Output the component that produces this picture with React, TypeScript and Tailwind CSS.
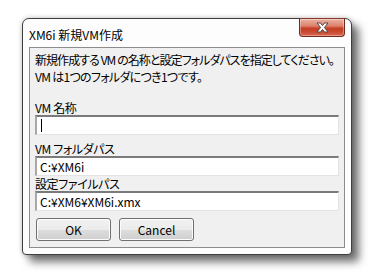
import React from "react";

const font = "font-['Noto_Sans_CJK_JP','Noto_Sans',sans-serif] [font-feature-settings:'palt']";

function Field({ label, value, cursor }: { label: string; value?: string; cursor?: boolean }) {
  return (
    <div className="flex flex-col">
      <div className="h-[15px] text-[12px] leading-[15px] tracking-[-0.4px] text-black whitespace-nowrap">{label}</div>
      <div className="h-[20px] w-[304px] bg-white border-t-[2px] border-l-[2px] border-t-[#7a7a7a] border-l-[#a8a8a8] border-b border-r border-b-[#e3e3e3] border-r-[#e3e3e3] flex items-center pl-[3px] text-[12px] leading-[16px] text-black">
        {cursor ? <div className="w-px h-[13px] bg-black ml-[1px]" /> : value}
      </div>
    </div>
  );
}

function Btn({ children, className = "" }: { children: React.ReactNode; className?: string }) {
  return (
    <div
      className={`w-[75px] h-[23px] rounded-[3px] border border-[#707070] flex items-center justify-center text-[12px] text-black bg-[linear-gradient(#f2f2f2_0%,#ebebeb_50%,#dddddd_51%,#cfcfcf_100%)] shadow-[inset_0_0_0_1px_#fcfcfc] ${className}`}
    >
      {children}
    </div>
  );
}

export default function App() {
  return (
    <div className={`w-[372px] h-[275px] bg-white pt-[18px] pl-[22px] ${font}`}>
      <div className="w-[330px] h-[237px] border border-[#3f3f3f] rounded-t-[7px] rounded-b-[4px] bg-[#fdfdfd] flex flex-col shadow-[0_0_5px_rgba(0,0,0,0.25),7px_7px_9px_rgba(0,0,0,0.55)]">
        <div className="h-[28px] flex justify-between pl-[6px] pr-[6px]">
          <div className="text-[12px] leading-[16px] pt-[8px] text-black whitespace-nowrap">XM6i 新規VM作成</div>
          <div className="-mt-px w-[46px] h-[19px] rounded-b-[4px] border border-[#6e2a1e] border-t-[#8a3a2c] bg-[linear-gradient(#eab2a4_0%,#de836d_40%,#c63f26_55%,#c6442b_70%,#d86650_100%)] flex items-center justify-center shadow-[inset_0_0_0_1px_rgba(255,255,255,0.35)]">
            <svg width="15" height="11" viewBox="0 0 15 11">
              <path
                d="M2 1 L5.5 1 L7.5 3.6 L9.5 1 L13 1 L9.4 5.5 L13 10 L9.5 10 L7.5 7.4 L5.5 10 L2 10 L5.6 5.5 Z"
                fill="#ffffff"
                stroke="#4a4a4a"
                strokeWidth="1"
                strokeLinejoin="round"
              />
            </svg>
          </div>
        </div>
        <div className="flex-1 mx-[6px] mb-[6px] border border-[#8c8c8c] bg-[#f0f0f0] pt-[3px] px-[5px] flex flex-col">
          <div className="text-[12px] leading-[17px] text-black whitespace-nowrap">
            <div className="tracking-[-0.95px]">新規作成する VM の名称と設定フォルダパスを指定してください。</div>
            <div className="tracking-[-0.7px]">VM は1つのフォルダにつき1つです。</div>
          </div>
          <div className="mt-[15px]">
            <Field label="VM 名称" cursor />
          </div>
          <div className="mt-[6px]">
            <Field label="VM フォルダパス" value="C:¥XM6i" />
          </div>
          <Field label="設定ファイルパス" value="C:¥XM6¥XM6i.xmx" />
          <div className="mt-[7px] flex gap-[8px] pl-[1px]">
            <Btn>OK</Btn>
            <Btn>Cancel</Btn>
          </div>
        </div>
      </div>
    </div>
  );
}
